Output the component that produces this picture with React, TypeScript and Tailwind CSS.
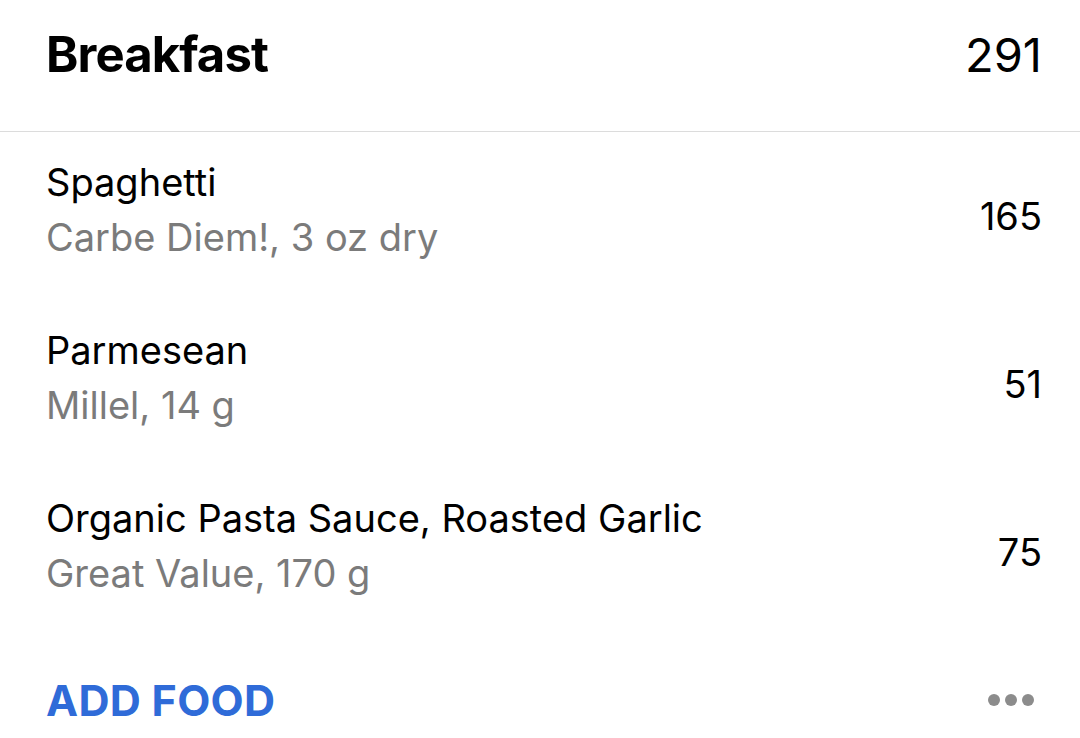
const foods = [
  { name: 'Spaghetti', detail: 'Carbe Diem!, 3 oz dry', cal: 165 },
  { name: 'Parmesean', detail: 'Millel, 14 g', cal: 51 },
  { name: 'Organic Pasta Sauce, Roasted Garlic', detail: 'Great Value, 170 g', cal: 75 },
]

export default function App() {
  return (
    <div className="w-[1080px] h-[738px] bg-white overflow-hidden font-['Inter',sans-serif] text-black">
      <div className="h-[132px] border-b border-[#dcdcdc] flex items-start justify-between pl-[46px] pr-[38px] pt-[25px]">
        <h1 className="text-[49px] font-bold tracking-[-0.9px] leading-[60px]">Breakfast</h1>
        <span className="text-[47px] leading-[60px]">291</span>
      </div>

      {foods.map((f) => (
        <div key={f.name} className="h-[168px] flex items-center justify-between pl-[46px] pr-[38px]">
          <div className="flex flex-col pb-[12px]">
            <span className="text-[38px] leading-[55px]">{f.name}</span>
            <span className="text-[38px] leading-[55px] text-[#7b7b7b]">{f.detail}</span>
          </div>
          <span className="text-[38px] leading-[55px]">{f.cal}</span>
        </div>
      ))}

      <div className="h-[128px] flex items-center justify-between pl-[46px] pr-[46px]">
        <button className="text-[43px] font-bold text-[#2f6bd8] tracking-[0.3px]">ADD FOOD</button>
        <div className="flex gap-[5px]">
          <span className="w-[12px] h-[12px] rounded-full bg-[#8c8c8c]" />
          <span className="w-[12px] h-[12px] rounded-full bg-[#8c8c8c]" />
          <span className="w-[12px] h-[12px] rounded-full bg-[#8c8c8c]" />
        </div>
      </div>
    </div>
  )
}
